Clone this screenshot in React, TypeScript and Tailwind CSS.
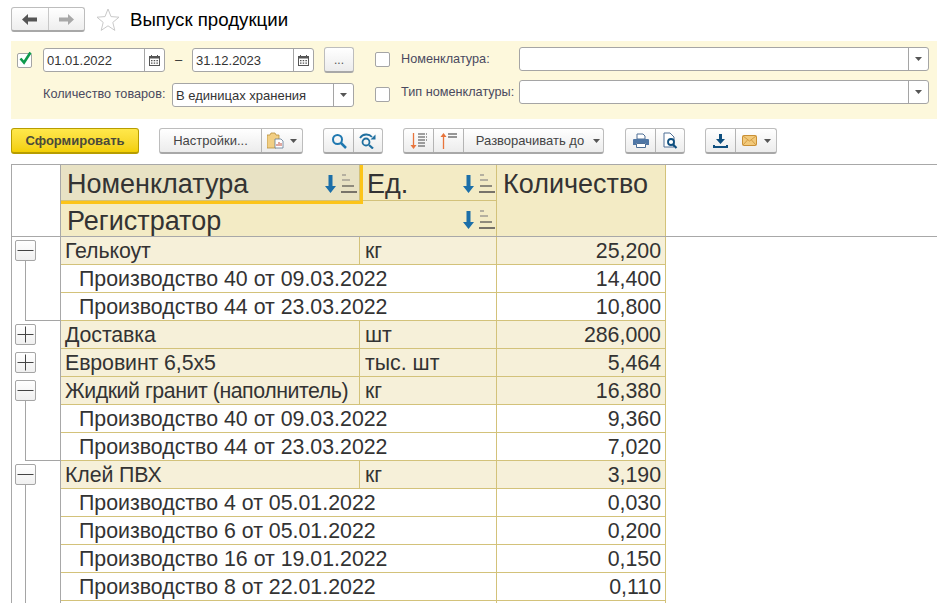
import React from "react";

type Row = { name: string; unit?: string; qty: string; kind: "open" | "closed" | "child" | "last"; tight?: boolean };

const rows: Row[] = [
  { name: "Гелькоут", unit: "кг", qty: "25,200", kind: "open" },
  { name: "Производство 40 от 09.03.2022", qty: "14,400", kind: "child" },
  { name: "Производство 44 от 23.03.2022", qty: "10,800", kind: "last" },
  { name: "Доставка", unit: "шт", qty: "286,000", kind: "closed" },
  { name: "Евровинт 6,5x5", unit: "тыс. шт", qty: "5,464", kind: "closed" },
  { name: "Жидкий гранит (наполнитель)", unit: "кг", qty: "16,380", kind: "open", tight: true },
  { name: "Производство 40 от 09.03.2022", qty: "9,360", kind: "child" },
  { name: "Производство 44 от 23.03.2022", qty: "7,020", kind: "last" },
  { name: "Клей ПВХ", unit: "кг", qty: "3,190", kind: "open" },
  { name: "Производство 4 от 05.01.2022", qty: "0,030", kind: "child" },
  { name: "Производство 6 от 05.01.2022", qty: "0,200", kind: "child" },
  { name: "Производство 16 от 19.01.2022", qty: "0,150", kind: "child" },
  { name: "Производство 8 от 22.01.2022", qty: "0,110", kind: "child" },
  { name: "", qty: "", kind: "child" },
];

const Caret = () => (
  <svg width="7" height="4" viewBox="0 0 7 4">
    <path d="M0 0h7L3.500 4z" fill="#555" />
  </svg>
);

const SortIcon = () => (
  <svg width="32" height="20" viewBox="0 0 32 20">
    <path d="M3.500 1h4v11h3.500L5.500 19 0 12h3.500z" fill="#1c6fa8" />
    <path d="M17 0h4v2h-4zM17 5h8v2h-8z" fill="#b5b0a0" />
    <path d="M17 11h12v2H17z" fill="#8f8b7d" />
    <path d="M16 17h16v2H16z" fill="#77736a" />
  </svg>
);

const CalendarIcon = () => (
  <svg width="11" height="11" viewBox="0 0 11 11">
    <path d="M2 0h1v1h5V0h1v1h2v10H0V1h2z" fill="#555" />
    <path d="M1 3.500h9V10H1z" fill="#fff" />
    <path d="M2 5h1.500v1.200H2zM4.700 5h1.500v1.200H4.700zM7.400 5h1.500v1.200H7.400zM2 7.500h1.500v1.200H2zM4.700 7.500h1.500v1.200H4.700zM7.400 7.500h1.500v1.200H7.400z" fill="#555" />
  </svg>
);

const Checkbox = ({ checked }: { checked?: boolean }) => (
  <span className="relative block h-[15px] w-[15px] shrink-0 rounded-[2px] border border-[#a5a5a5] bg-white">
    {checked && (
      <svg className="absolute -top-[4px] left-0" width="16" height="16" viewBox="0 0 16 16">
        <path d="M2.500 8.500l3.500 4 6.500-10" fill="none" stroke="#0f9a4c" strokeWidth="2.600" />
      </svg>
    )}
  </span>
);

const Field = ({ className, value, icon }: { className: string; value?: string; icon: React.ReactNode }) => (
  <div className={`flex h-[24px] items-stretch rounded-[3px] border border-[#a5a5a5] bg-white ${className}`}>
    <span className="flex-1 pl-[3px] text-[13px] leading-[24px] text-[#333]">{value}</span>
    <span className="flex w-[20px] items-center justify-center border-l border-[#a5a5a5]">{icon}</span>
  </div>
);

const Btn = ({ className = "", children }: { className?: string; children: React.ReactNode }) => (
  <div className={`flex h-full items-center justify-center border-r border-[#b4b4b4] last:border-r-0 ${className}`}>{children}</div>
);

const BtnGroup = ({ className = "", children }: { className?: string; children: React.ReactNode }) => (
  <div className={`flex h-[26px] items-stretch rounded-[3px] border border-b-2 border-[#bdbdbd] border-b-[#a8a8a8] bg-gradient-to-b from-white to-[#ececec] ${className}`}>
    {children}
  </div>
);

const Gutter = ({ kind }: { kind: Row["kind"] }) => {
  if (kind === "child") {
    return <div className="ml-[13px] h-full w-[35px] border-l border-[#a5a5a5]" />;
  }
  if (kind === "last") {
    return <div className="ml-[13px] h-full w-[35px] border-b border-l border-[#a5a5a5]" />;
  }
  return (
    <div className="flex h-full flex-col">
      <div className="ml-[3px] mt-[3px] h-[21px] w-[21px] shrink-0 rounded-[2px] border border-[#a5a5a5] bg-gradient-to-b from-white to-[#f0f0f0]">
        <svg width="19" height="19" viewBox="0 0 19 19">
          <path d="M1.500 9.500h16" stroke="#444" strokeWidth="1" />
          {kind === "closed" && <path d="M9.500 1.500v16" stroke="#444" strokeWidth="1" />}
        </svg>
      </div>
      {kind === "open" && <div className="ml-[13px] w-px flex-1 bg-[#a5a5a5]" />}
    </div>
  );
};

export default function App() {
  return (
    <div className="h-[603px] w-[937px] overflow-hidden bg-white font-['Liberation_Sans',Arial,sans-serif]">
      {/* Title */}
      <div className="flex h-[41px] items-start pl-[11px] pt-[7px]">
        <div className="flex h-[25px] w-[74px] items-stretch rounded-[3px] border border-b-2 border-[#bdbdbd] border-b-[#a8a8a8] bg-gradient-to-b from-white to-[#eeeeee]">
          <div className="flex flex-1 items-center justify-center border-r border-[#c8c8c8]">
            <svg width="15" height="11" viewBox="0 0 15 11">
              <path d="M0 5.500L6 0v3.500h9v4H6V11z" fill="#555" />
            </svg>
          </div>
          <div className="flex flex-1 items-center justify-center">
            <svg width="15" height="11" viewBox="0 0 15 11">
              <path d="M15 5.500L9 0v3.500H0v4h9V11z" fill="#a8a8a8" />
            </svg>
          </div>
        </div>
        <svg className="ml-[11px] mt-[1px]" width="24" height="23" viewBox="0 0 24 23">
          <path d="M12 1l3 7.600 8 .6-6.200 5.200 2 8L12 17.800 5.200 22.400l2-8L1 9.200l8-.6z" fill="#fff" stroke="#c9c9c9" />
        </svg>
        <h1 className="ml-[10px] text-[18.67px] leading-[26px] text-black">Выпуск продукции</h1>
      </div>

      {/* Filter */}
      <div className="ml-[11px] h-[78px] bg-[#fdf8dc] pt-[6px]">
        <div className="flex h-[26px] items-center">
          <div className="ml-[6px]"><Checkbox checked /></div>
          <Field className="ml-[11px] w-[122px]" value="01.01.2022" icon={<CalendarIcon />} />
          <span className="w-[27px] text-center text-[13px] text-[#333]">–</span>
          <Field className="w-[122px]" value="31.12.2023" icon={<CalendarIcon />} />
          <div className="ml-[10px] flex h-[26px] w-[30px] items-center justify-center rounded-[3px] border border-b-2 border-[#bdbdbd] border-b-[#a8a8a8] bg-gradient-to-b from-white to-[#ececec] text-[12px] text-[#555]">...</div>
          <div className="mb-[2px] ml-[21px]"><Checkbox /></div>
          <span className="ml-[11px] w-[118px] text-[12.7px] text-[#4a4a60]">Номенклатура:</span>
          <div className="mb-[2px]"><Field className="w-[410px]" icon={<Caret />} /></div>
        </div>
        <div className="mt-[8px] flex h-[26px] items-center">
          <span className="ml-[32px] mt-[2px] w-[129px] text-[12.7px] text-[#4a4a60]">Количество товаров:</span>
          <div className="mt-[2px]"><Field className="w-[182px]" value="В единицах хранения" icon={<Caret />} /></div>
          <div className="ml-[21px]"><Checkbox /></div>
          <span className="mb-[2px] ml-[11px] w-[118px] text-[12.7px] text-[#4a4a60]">Тип номенклатуры:</span>
          <div className="mb-[4px]"><Field className="w-[410px]" icon={<Caret />} /></div>
        </div>
      </div>

      {/* Toolbar */}
      <div className="flex h-[45px] items-start pl-[11px] pt-[9px]">
        <div className="flex h-[26px] w-[128px] items-center justify-center rounded-[3px] border border-b-2 border-[#b79d00] bg-gradient-to-b from-[#ffe84a] to-[#f3cf00] text-[13px] font-bold text-[#4a4a3a]">Сформировать</div>
        <BtnGroup className="ml-[20px] w-[144px] text-[13px] text-[#444]">
          <Btn className="w-[102px]">Настройки...</Btn>
          <Btn className="flex-1 gap-[6px]">
            <svg width="17" height="17" viewBox="0 0 17 17">
              <path d="M0 3h3l1-2h4l1 2h3v5H9v8H0z" fill="#f2cf84" stroke="#b88f3c" strokeWidth="0.800" />
              <path d="M8 7h6l2 2v7H8z" fill="#fff" stroke="#5f7a94" strokeWidth="0.800" />
              <path d="M10 14v-2M12 14v-4M14 14v-3" stroke="#c05040" strokeWidth="1" />
            </svg>
            <Caret />
          </Btn>
        </BtnGroup>
        <BtnGroup className="ml-[20px] w-[60px]">
          <Btn className="w-[30px]">
            <svg width="16" height="16" viewBox="0 0 16 16" fill="none" stroke="#1f78b0" strokeWidth="2">
              <circle cx="6.500" cy="6.500" r="4.500" />
              <path d="M10 10l5 5" strokeWidth="2.500" />
            </svg>
          </Btn>
          <Btn className="flex-1">
            <svg width="18" height="16" viewBox="0 0 18 16" fill="none" stroke="#1f6f9f" strokeWidth="1.800">
              <circle cx="7" cy="9" r="3.500" />
              <path d="M10 12l4 3.500" strokeWidth="2.200" />
              <path d="M1 5c3-4.500 9-4.500 12-1" />
              <path d="M16.500 1.500v5h-5z" fill="#1f6f9f" stroke="none" />
            </svg>
          </Btn>
        </BtnGroup>
        <BtnGroup className="ml-[20px] w-[201px] text-[13px] text-[#444]">
          <Btn className="w-[30px]">
            <svg width="18" height="18" viewBox="0 0 18 18">
              <path d="M3.500 1v14" stroke="#e8743b" strokeWidth="1.300" />
              <path d="M0.500 13h6l-3 4z" fill="#e8743b" />
              <path d="M8 2h9M8 5h9M8 8h9M8 11h7M8 14h7" stroke="#444" strokeWidth="1" strokeDasharray="7 1" />
            </svg>
          </Btn>
          <Btn className="w-[30px]">
            <svg width="18" height="18" viewBox="0 0 18 18">
              <path d="M3.500 3v14" stroke="#e8743b" strokeWidth="1.300" />
              <path d="M0.500 5h6l-3-4z" fill="#e8743b" />
              <path d="M8 2h9M8 5h9" stroke="#333" strokeWidth="1.200" />
            </svg>
          </Btn>
          <Btn className="flex-1 gap-[9px] pl-[9px]">
            <span>Разворачивать до</span>
            <Caret />
          </Btn>
        </BtnGroup>
        <BtnGroup className="ml-[21px] w-[60px]">
          <Btn className="w-[30px]">
            <svg width="16" height="15" viewBox="0 0 16 15">
              <path d="M4 1h6l2 2v3H4z" fill="#fff" stroke="#4f6f95" />
              <path d="M1 6h14a1 1 0 0 1 1 1v5h-3v-2H3v2H0V7a1 1 0 0 1 1-1z" fill="#4f76a5" />
              <path d="M3.500 10.500h9v4h-9z" fill="#fff" stroke="#4f6f95" />
            </svg>
          </Btn>
          <Btn className="flex-1">
            <svg width="15" height="17" viewBox="0 0 15 17">
              <path d="M1 1h6l4 4v10H1z" fill="#fff" stroke="#4f6f95" />
              <circle cx="8" cy="10" r="3" fill="#fff" stroke="#0f4f7f" strokeWidth="1.800" />
              <path d="M10 12.500l3.500 3.500" stroke="#0f4f7f" strokeWidth="2.200" />
            </svg>
          </Btn>
        </BtnGroup>
        <BtnGroup className="ml-[20px] w-[72px]">
          <Btn className="w-[30px]">
            <svg width="15" height="14" viewBox="0 0 15 14">
              <path d="M6 0h3v5h3L7.500 10 3 5h3z" fill="#0f4f7f" />
              <path d="M0 11h2v1h11v-1h2v3H0z" fill="#0f4f7f" />
            </svg>
          </Btn>
          <Btn className="flex-1 gap-[7px]">
            <svg width="15" height="11" viewBox="0 0 15 11">
              <rect x="0.500" y="0.500" width="14" height="10" rx="1" fill="#f2c97a" stroke="#c98f35" />
              <path d="M1 1l6.500 5L14 1M1 10l4.500-5M14 10L9.500 5" fill="none" stroke="#c98f35" strokeWidth="0.800" />
            </svg>
            <Caret />
          </Btn>
        </BtnGroup>
      </div>

      {/* Report table */}
      <div className="ml-[11px] border-l border-t border-[#a8a8a8]">
        <div className="flex h-[71px]">
          <div className="w-[49px] shrink-0 border-r border-[#a8a8a8]" />
          <div className="w-[302px] text-[27px] leading-[34px] text-[#333]">
            <div className="h-[39px] border-b-[3px] border-r-[3px] border-[#fcc419]">
              <div className="flex h-full items-start justify-between border-b border-r border-[#d3c27a] bg-[#e8e2c4] pl-[6px] pr-[2px]">
                <span className="mt-[2px]">Номенклатура</span>
                <span className="mt-[9px]"><SortIcon /></span>
              </div>
            </div>
            <div className="h-[32px] bg-[#f3ebc5] pl-[6px]">Регистратор</div>
          </div>
          <div className="w-[134px] border-r border-[#d3c27a] text-[27px] leading-[34px] text-[#333]">
            <div className="flex h-[36px] items-start justify-between border-b border-[#d3c27a] bg-[#f3ebc5] pl-[4px] pr-[1px]">
              <span className="mt-[2px]">Ед.</span>
              <span className="mt-[9px]"><SortIcon /></span>
            </div>
            <div className="flex h-[35px] justify-end bg-[#f3ebc5] pr-[1px] pt-[9px]"><SortIcon /></div>
          </div>
          <div className="w-[169px] border-r border-[#d3c27a] bg-[#f3ebc5] pl-[6px] pt-[2px] text-[27px] leading-[34px] text-[#333]">Количество</div>
        </div>
        <div className="border-t border-[#a8a8a8]">
          {rows.map((r, i) => {
            const group = r.kind === "open" || r.kind === "closed";
            return (
              <div key={i} className="flex h-[28px]">
                <div className="w-[49px] shrink-0 border-r border-[#a8a8a8]"><Gutter kind={r.kind} /></div>
                <div className={`flex w-[605px] whitespace-nowrap border-b border-r border-[#d3c27a] text-[21.33px] leading-[27px] text-[#333] ${group ? "bg-[#f6f0d9]" : "bg-white"}`}>
                  {group ? (
                    <>
                      <div className={`w-[299px] border-r border-[#d3c27a] pl-[4px] pt-[1px] ${r.tight ? "tracking-[-0.45px]" : "tracking-[-0.1px]"}`}>{r.name}</div>
                      <div className="w-[137px] border-r border-[#d3c27a] pl-[5px] pt-[1px]">{r.unit}</div>
                    </>
                  ) : (
                    <div className="w-[436px] border-r border-[#d3c27a] pl-[18px] pt-[1px]">{r.name}</div>
                  )}
                  <div className="flex-1 pr-[4px] pt-[1px] text-right">{r.qty}</div>
                </div>
              </div>
            );
          })}
        </div>
      </div>
    </div>
  );
}
